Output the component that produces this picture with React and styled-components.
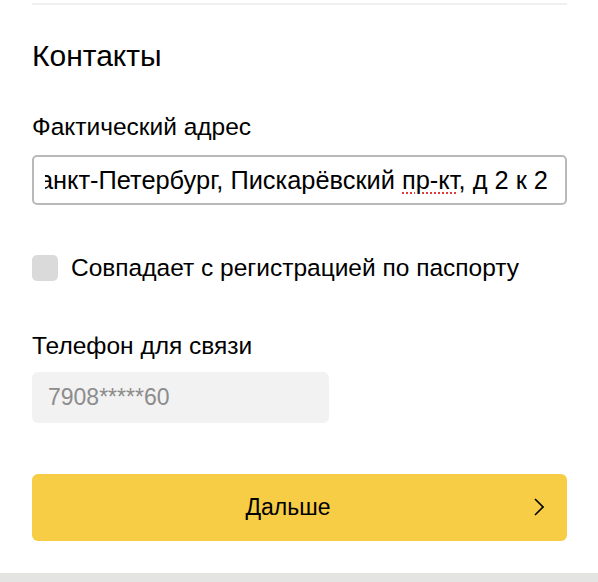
import React from 'react';
import styled, { createGlobalStyle } from 'styled-components';

const GlobalStyle = createGlobalStyle`
  html, body {
    margin: 0;
    padding: 0;
    background: #e4e4e2;
  }
  body {
    font-family: "Liberation Sans", Arial, sans-serif;
    color: #000;
  }
`;

const App = () => {
  return (
    <>
      <GlobalStyle />
      <Card>
        <Divider />
        <Heading>Контакты</Heading>
        <Field $top={41}>
          <Label>Фактический адрес</Label>
          <AddressBox>
            <AddressScroller>
              <AddressText>
                Санкт-Петербург, Пискарёвский <Misspelled>пр-кт</Misspelled>, д 2 к 2
              </AddressText>
            </AddressScroller>
          </AddressBox>
        </Field>
        <CheckRow>
          <CheckBox />
          <CheckLabel>Совпадает с регистрацией по паспорту</CheckLabel>
        </CheckRow>
        <Field $top={52} $gap={13}>
          <Label>Телефон для связи</Label>
          <PhoneBox>7908*****60</PhoneBox>
        </Field>
        <NextButton type="button">
          <span>Дальше</span>
          <Chevron viewBox="0 0 10 18" aria-hidden="true">
            <path d="M1 1 L9 9 L1 17" />
          </Chevron>
        </NextButton>
      </Card>
    </>
  );
};

export default App;

const Card = styled.div`
  background: #fff;
  height: 573px;
  padding: 0 31px 0 32px;
  box-sizing: border-box;
  display: flex;
  flex-direction: column;
`;

const Divider = styled.div`
  margin-top: 3px;
  height: 2px;
  background: #efefef;
`;

const Heading = styled.h2`
  margin: 34px 0 0;
  font-size: 30px;
  line-height: 34px;
  font-weight: 400;
`;

const Field = styled.div`
  display: flex;
  flex-direction: column;
  gap: ${(p) => p.$gap || 15}px;
  margin-top: ${(p) => p.$top}px;
`;

const Label = styled.div`
  font-size: 24.5px;
  line-height: 26px;
`;

const AddressBox = styled.div`
  height: 50px;
  box-sizing: border-box;
  border: 2px solid #b9b9b9;
  border-radius: 5px;
  display: flex;
  align-items: center;
  padding: 0 17px 0 11px;
`;

const AddressScroller = styled.div`
  flex: 1;
  display: flex;
  justify-content: flex-end;
  overflow: hidden;
  padding-bottom: 6px;
  margin-bottom: -6px;
`;

const AddressText = styled.span`
  white-space: nowrap;
  font-size: 25.4px;
`;

const Misspelled = styled.span`
  text-decoration: underline dotted #e23b3b;
  text-decoration-thickness: 2px;
  text-underline-offset: 4px;
`;

const CheckRow = styled.label`
  display: flex;
  align-items: center;
  gap: 13px;
  margin-top: 50px;
`;

const CheckBox = styled.span`
  width: 26px;
  height: 26px;
  border-radius: 5px;
  background: #dadada;
  flex-shrink: 0;
`;

const CheckLabel = styled.span`
  font-size: 24.5px;
  line-height: 26px;
`;

const PhoneBox = styled.div`
  width: 297px;
  height: 51px;
  box-sizing: border-box;
  background: #f2f2f2;
  border-radius: 6px;
  display: flex;
  align-items: center;
  padding-left: 16px;
  font-size: 23px;
  color: #8c8c8c;
`;

const NextButton = styled.button`
  margin-top: 51px;
  height: 67px;
  border: none;
  border-radius: 6px;
  background: #f6cd45;
  position: relative;
  display: flex;
  align-items: center;
  justify-content: center;
  font-family: "Liberation Sans", Arial, sans-serif;
  font-size: 23px;
  color: #000;
  padding: 0 23px 0 0;
  cursor: pointer;
`;

const Chevron = styled.svg`
  position: absolute;
  right: 23px;
  top: 24px;
  width: 10px;
  height: 18px;
  fill: none;
  stroke: #000;
  stroke-width: 1.6;
`;
